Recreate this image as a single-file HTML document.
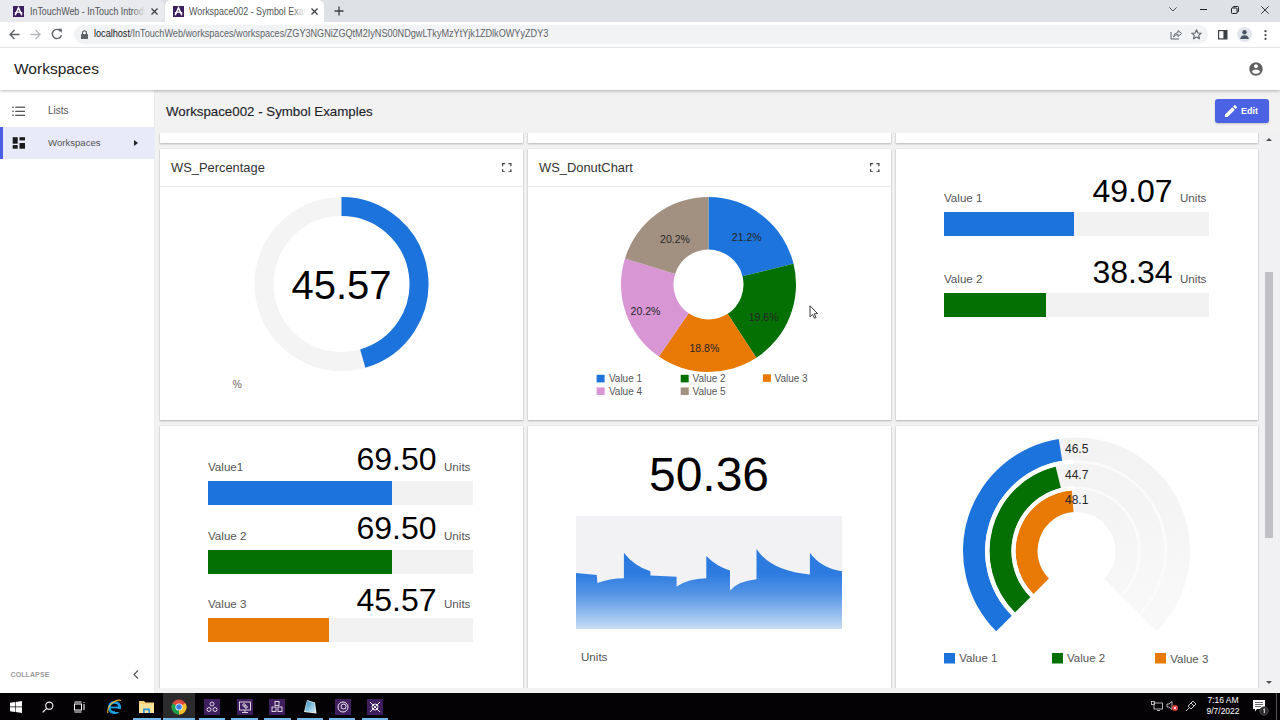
<!DOCTYPE html>
<html><head><meta charset="utf-8">
<style>
*{box-sizing:border-box;margin:0;padding:0}
html,body{width:1280px;height:720px;overflow:hidden;background:#fff;font-family:"Liberation Sans",sans-serif}
.abs{position:absolute}
#tabstrip{left:0;top:0;width:1280px;height:23px;background:#dee1e6}
#tab1{left:0;top:0;width:164px;height:22px;background:#e9eaed;border-radius:0 6px 6px 0}
#tab2{left:165px;top:0;width:159px;height:23px;background:#fff;border-radius:6px 6px 0 0}
.tabt{font-size:10px;color:#505357;white-space:nowrap;overflow:hidden}
#toolbar{left:0;top:22px;width:1280px;height:26px;background:#fff;border-bottom:1px solid #f1f1f1}
#omni{left:74px;top:3px;width:1134px;height:19px;background:#f1f3f4;border-radius:10px}
#apphdr{left:0;top:48px;width:1280px;height:42px;background:#fff;box-shadow:0 1px 3px rgba(0,0,0,.28);z-index:3}
#sidebar{left:0;top:90px;width:155px;height:603px;background:#fff;z-index:2;border-right:1px solid #ececec}
#main{left:155px;top:90px;width:1125px;height:603px;background:#f2f2f2;overflow:hidden}
#taskbar{left:0;top:693px;width:1280px;height:27px;background:#050206;z-index:5}
.ttl{font-size:12.9px;color:#333;white-space:nowrap}
.big{color:#000;white-space:nowrap;line-height:1}
.lbl{font-size:11.6px;color:#555;white-space:nowrap}
.card{position:absolute;background:#fff;box-shadow:0 1px 2px rgba(0,0,0,.25),0 0 1px rgba(0,0,0,.12)}
</style></head>
<body>
<!-- ===== tab strip ===== -->
<div id="tabstrip" class="abs">
  <div id="tab1" class="abs"></div>
  <svg class="abs" style="left:13px;top:6px" width="11" height="11" viewBox="0 0 11 11"><rect width="11" height="11" fill="#3b1f5e"/><path d="M2.2 9.3 L5.5 1.8 L8.8 9.3" stroke="#fff" stroke-width="1.5" fill="none"/><path d="M1.8 7.2 Q5.5 5.2 9.4 7" stroke="#fff" stroke-width="1.1" fill="none"/></svg>
  <div class="abs tabt" style="left:30px;top:5.5px;width:117px"><span style="display:inline-block;transform:scaleX(0.89);transform-origin:0 0">InTouchWeb - InTouch Introduction</span></div>
  <div class="abs" style="left:132px;top:2px;width:16px;height:18px;background:linear-gradient(90deg,rgba(233,234,237,0),#e9eaed 85%)"></div>
  <svg class="abs" style="left:151px;top:8px" width="7" height="7" viewBox="0 0 7 7"><path d="M0.5 0.5 L6.5 6.5 M6.5 0.5 L0.5 6.5" stroke="#3c4043" stroke-width="1.3"/></svg>
  <div id="tab2" class="abs"></div>
  <svg class="abs" style="left:173px;top:6px" width="11" height="11" viewBox="0 0 11 11"><rect width="11" height="11" fill="#3b1f5e"/><path d="M2.2 9.3 L5.5 1.8 L8.8 9.3" stroke="#fff" stroke-width="1.5" fill="none"/><path d="M1.8 7.2 Q5.5 5.2 9.4 7" stroke="#fff" stroke-width="1.1" fill="none"/></svg>
  <div class="abs tabt" style="left:189px;top:5.5px;width:118px"><span style="display:inline-block;transform:scaleX(0.89);transform-origin:0 0">Workspace002 - Symbol Examples</span></div>
  <div class="abs" style="left:292px;top:2px;width:16px;height:18px;background:linear-gradient(90deg,rgba(255,255,255,0),#fff 85%)"></div>
  <svg class="abs" style="left:311px;top:8px" width="7" height="7" viewBox="0 0 7 7"><path d="M0.5 0.5 L6.5 6.5 M6.5 0.5 L0.5 6.5" stroke="#3c4043" stroke-width="1.3"/></svg>
  <svg class="abs" style="left:334px;top:6px" width="10" height="10" viewBox="0 0 10 10"><path d="M5 0.5 V9.5 M0.5 5 H9.5" stroke="#3c4043" stroke-width="1.3"/></svg>
  <!-- window controls -->
  <svg class="abs" style="left:1168.5px;top:6.5px" width="8" height="4.5" viewBox="0 0 8 4.5"><path d="M0.4 0.4 L4 4 L7.6 0.4" stroke="#3c4043" stroke-width="0.9" fill="none"/></svg>
  <div class="abs" style="left:1200px;top:9px;width:7px;height:1px;background:#202124"></div>
  <svg class="abs" style="left:1231px;top:6px" width="8" height="8" viewBox="0 0 8 8"><rect x="0.5" y="2" width="5.5" height="5.5" rx="0.8" fill="none" stroke="#202124" stroke-width="1"/><path d="M2 2 V1.3 Q2 0.5 2.8 0.5 H6.7 Q7.5 0.5 7.5 1.3 V5.2 Q7.5 6 6.7 6 H6" fill="none" stroke="#202124" stroke-width="1"/></svg>
  <svg class="abs" style="left:1261px;top:6px" width="8" height="8" viewBox="0 0 8 8"><path d="M0.3 0.3 L7.7 7.7 M7.7 0.3 L0.3 7.7" stroke="#202124" stroke-width="0.9"/></svg>
</div>
<!-- ===== toolbar ===== -->
<div id="toolbar" class="abs">
  <svg class="abs" style="left:9px;top:7px" width="11" height="11" viewBox="0 0 11 11"><path d="M10.5 5.5 H1.2 M5.5 1 L1 5.5 L5.5 10" stroke="#5f6368" stroke-width="1.4" fill="none"/></svg>
  <svg class="abs" style="left:30px;top:7px" width="11" height="11" viewBox="0 0 11 11"><path d="M0.5 5.5 H9.8 M5.5 1 L10 5.5 L5.5 10" stroke="#b5b8bb" stroke-width="1.4" fill="none"/></svg>
  <svg class="abs" style="left:51px;top:6px" width="12" height="12" viewBox="0 0 12 12"><path d="M9.6 3.2 A4.6 4.6 0 1 0 10.4 7.2" stroke="#5f6368" stroke-width="1.4" fill="none"/><path d="M6.8 0.8 H10.8 V4.8 Z" fill="#5f6368"/></svg>
  <div id="omni" class="abs">
    <svg class="abs" style="left:7px;top:5px" width="7" height="9" viewBox="0 0 7 9"><path d="M1.5 4 V2.8 A2 2 0 0 1 5.5 2.8 V4" stroke="#5f6368" stroke-width="1.2" fill="none"/><rect x="0" y="4" width="7" height="5" rx="0.6" fill="#5f6368"/></svg>
    <div class="abs" style="left:20px;top:3px;font-size:10px;color:#5f6368;white-space:nowrap;transform:scaleX(0.911);transform-origin:0 0"><span style="color:#202124">localhost</span>/InTouchWeb/workspaces/workspaces/ZGY3NGNiZGQtM2IyNS00NDgwLTkyMzYtYjk1ZDlkOWYyZDY3</div>
    <svg class="abs" style="left:1096px;top:4px" width="12" height="11" viewBox="0 0 12 11"><path d="M1 3 V10 H9" stroke="#5f6368" stroke-width="1" fill="none"/><path d="M3.5 8 Q4 4 8 3.5 V1.5 L11.5 4.5 L8 7.5 V5.5 Q5.5 5.5 3.5 8 Z" stroke="#5f6368" stroke-width="1" fill="none"/></svg>
    <svg class="abs" style="left:1117px;top:4px" width="11" height="11" viewBox="0 0 11 11"><path d="M5.5 0.8 L6.9 4 L10.3 4.2 L7.7 6.4 L8.5 9.8 L5.5 8 L2.5 9.8 L3.3 6.4 L0.7 4.2 L4.1 4 Z" stroke="#5f6368" stroke-width="1.1" fill="none" stroke-linejoin="round"/></svg>
  </div>
  <svg class="abs" style="left:1218px;top:8px" width="9.5" height="9.5" viewBox="0 0 9.5 9.5"><rect x="0.6" y="0.6" width="8.3" height="8.3" fill="none" stroke="#3c4043" stroke-width="1.2"/><rect x="5.4" y="0.6" width="3.5" height="8.3" fill="#3c4043"/></svg>
  <div class="abs" style="left:1237px;top:5px;width:15px;height:15px;border-radius:50%;background:#e3e5ec"></div>
  <svg class="abs" style="left:1239px;top:7px" width="11" height="11" viewBox="0 0 11 11"><circle cx="5.5" cy="3.2" r="2.2" fill="#4b5563"/><path d="M1.2 10 Q1.5 6.2 5.5 6.2 Q9.5 6.2 9.8 10 Z" fill="#4b5563"/></svg>
  <svg class="abs" style="left:1264px;top:8px" width="3" height="10" viewBox="0 0 3 10"><circle cx="1.5" cy="1.2" r="1.1" fill="#3c4043"/><circle cx="1.5" cy="5" r="1.1" fill="#3c4043"/><circle cx="1.5" cy="8.8" r="1.1" fill="#3c4043"/></svg>
</div>
<!-- ===== app header ===== -->
<div id="apphdr" class="abs">
  <div class="abs" style="left:14px;top:12px;font-size:15.5px;color:#222">Workspaces</div>
  <svg class="abs" style="left:1248px;top:12.6px" width="16" height="16" viewBox="0 0 24 24"><path fill="#616161" d="M12 2C6.48 2 2 6.48 2 12s4.48 10 10 10 10-4.48 10-10S17.52 2 12 2zm0 3c1.66 0 3 1.34 3 3s-1.34 3-3 3-3-1.34-3-3 1.34-3 3-3zm0 14.2c-2.5 0-4.71-1.28-6-3.22.03-1.99 4-3.08 6-3.08 1.99 0 5.97 1.09 6 3.08-1.29 1.94-3.5 3.22-6 3.22z"/></svg>
</div>
<!-- ===== sidebar ===== -->
<div id="sidebar" class="abs">
  <svg class="abs" style="left:12px;top:16px" width="14" height="11" viewBox="0 0 14 11"><g fill="#3a3a3a"><circle cx="1" cy="1.2" r="0.8"/><rect x="3.2" y="0.65" width="9.8" height="1.1"/><circle cx="1" cy="5.3" r="0.8"/><rect x="3.2" y="4.75" width="9.8" height="1.1"/><circle cx="1" cy="9.3" r="0.8"/><rect x="3.2" y="8.75" width="9.8" height="1.1"/></g></svg>
  <div class="abs" style="left:48px;top:15px;font-size:10px;color:#555">Lists</div>
  <div class="abs" style="left:0;top:37px;width:155px;height:32px;background:#e8eaf8"></div>
  <div class="abs" style="left:0;top:37px;width:3px;height:32px;background:#4a5de3"></div>
  <svg class="abs" style="left:12px;top:47px" width="14" height="12" viewBox="0 0 14 12"><g fill="#1a1a1a"><rect x="0.7" y="0.2" width="5" height="6.5"/><rect x="0.7" y="8.1" width="5" height="3.6"/><rect x="7.5" y="0.2" width="5.5" height="3.2"/><rect x="7.5" y="6" width="5.5" height="5.7"/></g></svg>
  <div class="abs" style="left:48px;top:47px;font-size:9.6px;color:#555">Workspaces</div>
  <svg class="abs" style="left:134px;top:50px" width="4" height="6" viewBox="0 0 4 6"><path d="M0 0 L4 3 L0 6 Z" fill="#222"/></svg>
  <div class="abs" style="left:10.5px;top:581px;font-size:7px;color:#9a9a9a;letter-spacing:0.1px;font-weight:bold">COLLAPSE</div>
  <svg class="abs" style="left:133px;top:580px" width="6" height="9" viewBox="0 0 6 9"><path d="M5 0.5 L1 4.5 L5 8.5" stroke="#555" stroke-width="1.2" fill="none"/></svg>
</div>
<!-- ===== main ===== -->
<div id="main" class="abs">
  <div class="abs" style="left:11px;top:14px;font-size:13.3px;color:#1f1f2a;font-weight:500;-webkit-text-stroke:0.15px #1f1f2a">Workspace002 - Symbol Examples</div>
  <div class="abs" style="left:1060px;top:9px;width:54px;height:24px;background:#4a62e3;border-radius:3px;box-shadow:0 1px 2px rgba(0,0,0,.2)">
    <svg class="abs" style="left:7.5px;top:4px" width="16" height="16" viewBox="0 0 24 24"><path fill="#fff" d="M3 17.25V21h3.75L17.81 9.94l-3.75-3.75L3 17.25zM20.71 7.04a1 1 0 0 0 0-1.41l-2.34-2.34a1 1 0 0 0-1.41 0l-1.83 1.83 3.75 3.75 1.83-1.83z"/></svg>
    <div class="abs" style="left:26px;top:6.5px;font-size:9px;color:#fff;font-weight:bold">Edit</div>
  </div>
  <div class="abs" id="scroll" style="left:0;top:43px;width:1125px;height:555px;overflow:hidden">
  <!-- scrollbar -->
  <div class="abs" style="left:1103px;top:0;width:22px;height:555px;background:#f1f1f3"></div>
  <div class="abs" style="left:1110px;top:139px;width:8px;height:266px;background:#c1c0c4"></div>
  <svg class="abs" style="left:1111px;top:5px" width="6" height="3" viewBox="0 0 6 3"><path d="M0 3 L3 0 L6 3 Z" fill="#505050"/></svg>
  <svg class="abs" style="left:1111px;top:548px" width="6" height="3" viewBox="0 0 6 3"><path d="M0 0 L3 3 L6 0 Z" fill="#505050"/></svg>

  <!-- top partial row -->
  <div class="card" style="left:5px;top:-60px;width:363px;height:70px"></div>
  <div class="card" style="left:373px;top:-60px;width:363px;height:70px"></div>
  <div class="card" style="left:741px;top:-60px;width:362px;height:70px"></div>

  <!-- row 1 -->
  <div class="card" id="c11" style="left:5px;top:16px;width:363px;height:271px">
    <div class="abs ttl" style="left:11px;top:11px">WS_Percentage</div><svg class="abs" style="left:342px;top:13.5px" width="9.5" height="9.5" viewBox="0 0 9.5 9.5"><path d="M0.6 3.2 V0.6 H3.1 M6.4 0.6 H8.9 V3.2 M8.9 6.3 V8.9 H6.4 M3.1 8.9 H0.6 V6.3" stroke="#444" stroke-width="1.2" fill="none"/></svg>
    <div class="abs" style="left:0;top:37px;width:363px;height:1px;background:#e9e9e9"></div>
    <svg class="abs" style="left:0;top:0" width="363" height="271">
      <circle cx="181.5" cy="135" r="77.5" fill="none" stroke="#f4f4f4" stroke-width="19"/>
      <path d="M181.50 57.50 A77.5 77.5 0 0 1 202.79 209.52" fill="none" stroke="#1b73db" stroke-width="19"/>
    </svg>
    <div class="abs big" style="left:81.5px;top:116px;width:200px;text-align:center;font-size:40px">45.57</div>
    <div class="abs" style="left:72.5px;top:228.5px;font-size:10.5px;color:#666">%</div>
  </div>
  <div class="card" id="c12" style="left:373px;top:16px;width:363px;height:271px">
    <div class="abs ttl" style="left:11px;top:11px">WS_DonutChart</div><svg class="abs" style="left:342px;top:13.5px" width="9.5" height="9.5" viewBox="0 0 9.5 9.5"><path d="M0.6 3.2 V0.6 H3.1 M6.4 0.6 H8.9 V3.2 M8.9 6.3 V8.9 H6.4 M3.1 8.9 H0.6 V6.3" stroke="#444" stroke-width="1.2" fill="none"/></svg>
    <div class="abs" style="left:0;top:37px;width:363px;height:1px;background:#e9e9e9"></div>
    <svg class="abs" style="left:0;top:0" width="363" height="271">
<path d="M180.50 48.00 A87.5 87.5 0 0 1 265.52 114.81 L214.51 127.22 A35 35 0 0 0 180.50 100.50Z" fill="#1d74dc"/>
<path d="M265.52 114.81 A87.5 87.5 0 0 1 228.31 208.78 L199.62 164.81 A35 35 0 0 0 214.51 127.22Z" fill="#047004"/>
<path d="M228.31 208.78 A87.5 87.5 0 0 1 130.86 207.56 L160.65 164.32 A35 35 0 0 0 199.62 164.81Z" fill="#e87a03"/>
<path d="M130.86 207.56 A87.5 87.5 0 0 1 96.95 109.51 L147.08 125.10 A35 35 0 0 0 160.65 164.32Z" fill="#d896d5"/>
<path d="M96.95 109.51 A87.5 87.5 0 0 1 180.50 48.00 L180.50 100.50 A35 35 0 0 0 147.08 125.10Z" fill="#a29181"/>
      <g font-family="Liberation Sans" font-size="10.5" fill="#262626" text-anchor="middle">
        <text x="218.7" y="92">21.2%</text>
        <text x="235.6" y="172">19.6%</text>
        <text x="176.4" y="202.5">18.8%</text>
        <text x="117.5" y="166">20.2%</text>
        <text x="147" y="94">20.2%</text>
      </g>
      <g fill-opacity="1">
        <rect x="68.6" y="225.8" width="8" height="7.6" fill="#1d74dc"/>
        <rect x="152.7" y="225.8" width="8" height="7.6" fill="#047004"/>
        <rect x="234.9" y="225.3" width="8" height="7.6" fill="#e87a03"/>
        <rect x="68.6" y="238.4" width="8" height="7.6" fill="#d896d5"/>
        <rect x="152.7" y="238.4" width="8" height="7.6" fill="#a29181"/>
      </g>
      <g font-family="Liberation Sans" font-size="10" fill="#555">
        <text x="80.9" y="233">Value 1</text>
        <text x="164.5" y="233">Value 2</text>
        <text x="246.5" y="232.5">Value 3</text>
        <text x="80.9" y="246">Value 4</text>
        <text x="164.5" y="246">Value 5</text>
      </g>
    </svg>
  </div>
  <div class="card" id="c13" style="left:741px;top:16px;width:362px;height:271px">
    <div class="abs lbl" style="left:48px;top:42px">Value 1</div>
    <div class="abs big" style="left:148.5px;top:25.5px;width:128px;text-align:right;font-size:32px">49.07</div>
    <div class="abs lbl" style="left:284px;top:42px">Units</div>
    <div class="abs" style="left:48px;top:63px;width:265px;height:24px;background:#f2f2f2"></div>
    <div class="abs" style="left:48px;top:63px;width:130.0px;height:24px;background:#1b73db"></div>
    <div class="abs lbl" style="left:48px;top:123px">Value 2</div>
    <div class="abs big" style="left:148.5px;top:106.5px;width:128px;text-align:right;font-size:32px">38.34</div>
    <div class="abs lbl" style="left:284px;top:123px">Units</div>
    <div class="abs" style="left:48px;top:144px;width:265px;height:24px;background:#f2f2f2"></div>
    <div class="abs" style="left:48px;top:144px;width:101.6px;height:24px;background:#047004"></div>
  </div>
  <!-- row 2 -->
  <div class="card" id="c21" style="left:5px;top:293px;width:363px;height:275px">
    <div class="abs lbl" style="left:48px;top:34px">Value1</div>
    <div class="abs big" style="left:148.5px;top:17px;width:128px;text-align:right;font-size:32px">69.50</div>
    <div class="abs lbl" style="left:284px;top:34px">Units</div>
    <div class="abs" style="left:48px;top:55px;width:265px;height:24px;background:#f2f2f2"></div>
    <div class="abs" style="left:48px;top:55px;width:184.2px;height:24px;background:#1b73db"></div>
    <div class="abs lbl" style="left:48px;top:102.5px">Value 2</div>
    <div class="abs big" style="left:148.5px;top:85.5px;width:128px;text-align:right;font-size:32px">69.50</div>
    <div class="abs lbl" style="left:284px;top:102.5px">Units</div>
    <div class="abs" style="left:48px;top:123.5px;width:265px;height:24px;background:#f2f2f2"></div>
    <div class="abs" style="left:48px;top:123.5px;width:184.2px;height:24px;background:#047004"></div>
    <div class="abs lbl" style="left:48px;top:171px">Value 3</div>
    <div class="abs big" style="left:148.5px;top:158px;width:128px;text-align:right;font-size:32px">45.57</div>
    <div class="abs lbl" style="left:284px;top:171px">Units</div>
    <div class="abs" style="left:48px;top:192px;width:265px;height:24px;background:#f2f2f2"></div>
    <div class="abs" style="left:48px;top:192px;width:120.8px;height:24px;background:#e87a03"></div>
  </div>
  <div class="card" id="c22" style="left:373px;top:293px;width:363px;height:275px">
    <div class="abs big" style="left:81px;top:25px;width:200px;text-align:center;font-size:48px">50.36</div>
    <svg class="abs" style="left:48px;top:90px" width="266" height="113" viewBox="0 0 266 113">
      <defs><linearGradient id="ag" x1="0" y1="0" x2="0" y2="1"><stop offset="0.3" stop-color="#2d7bdf"/><stop offset="0.55" stop-color="#5293e5"/><stop offset="0.85" stop-color="#9dc3f0"/><stop offset="1" stop-color="#c9def6"/></linearGradient></defs>
      <rect width="266" height="113" fill="#f2f2f4"/>
      <path d="M0 56.9 L20.8 59 L21.4 67 Q34 62.5 47.9 62.3 L47.9 36.7 Q58 50 74.4 55.3 L74.4 59.4 L100.6 60.7 L100.6 70.6 Q112 62.8 130.3 62.3 L130.3 40 Q140 50 154 54.6 L154 74.4 Q162 65 180.5 63.2 L180.5 32.9 Q195 55 233.9 58.4 L233.9 36.7 Q245 52 266 55.3 L266 113 L0 113 Z" fill="url(#ag)"/>
    </svg>
    <div class="abs lbl" style="left:53px;top:223.5px">Units</div>
  </div>
  <div class="card" id="c23" style="left:741px;top:293px;width:362px;height:275px">
    <svg class="abs" style="left:0;top:0" width="362" height="262">
      <defs><linearGradient id="tg" x1="0" y1="0" x2="0.3" y2="1"><stop offset="0" stop-color="#f2f2f3"/><stop offset="0.5" stop-color="#f4f4f5"/><stop offset="1" stop-color="#f8f8f9"/></linearGradient></defs>
      <path d="M100.24 205.26 A113.5 113.5 0 1 1 260.76 205.26 L208.08 152.58 A39 39 0 1 0 152.92 152.58Z" fill="url(#tg)"/>
      <path d="M117.39 188.11 A89.25 89.25 0 1 1 243.61 188.11" fill="none" stroke="#fbfbfb" stroke-width="2.5"/>
      <path d="M135.95 169.55 A63 63 0 1 1 225.05 169.55" fill="none" stroke="#fbfbfb" stroke-width="2.5"/>
      <path d="M100.24 205.26 A113.5 113.5 0 0 1 162.74 12.90 L166.19 34.63 A91.5 91.5 0 0 0 115.80 189.70Z" fill="#1b73db"/>
      <path d="M118.98 186.52 A87 87 0 0 1 159.60 40.55 L164.89 61.90 A65 65 0 0 0 134.54 170.96Z" fill="#047004"/>
      <path d="M137.37 168.13 A61 61 0 0 1 175.82 64.18 L177.51 86.11 A39 39 0 0 0 152.92 152.58Z" fill="#e87a03"/>
      <path d="M117.39 188.11 A89.25 89.25 0 0 1 177.39 35.80" fill="none" stroke="#fff" stroke-width="4.2"/>
      <path d="M135.95 169.55 A63 63 0 0 1 178.30 62.04" fill="none" stroke="#fff" stroke-width="4.2"/>
      <g font-family="Liberation Sans" font-size="12" fill="#262626">
        <text x="169" y="27.3">46.5</text>
        <text x="169" y="53">44.7</text>
        <text x="169" y="78.3">48.1</text>
      </g>
      <rect x="48" y="227" width="11" height="10.5" fill="#1b73db"/>
      <rect x="156" y="227" width="11" height="10.5" fill="#047004"/>
      <rect x="259" y="227" width="11" height="10.5" fill="#e87a03"/>
      <g font-family="Liberation Sans" font-size="11.5" fill="#555">
        <text x="63.3" y="236.3">Value 1</text>
        <text x="171" y="236.3">Value 2</text>
        <text x="274.2" y="236.6">Value 3</text>
      </g>
    </svg>
  </div>
</div>
</div>
<!-- ===== taskbar ===== -->
<div id="taskbar" class="abs">
  <!-- windows logo -->
  <svg class="abs" style="left:10px;top:8px" width="12" height="12" viewBox="0 0 12 12"><g fill="#fff"><path d="M0 1.7 L5 1 V5.6 H0Z"/><path d="M5.6 0.9 L12 0 V5.6 H5.6Z"/><path d="M0 6.2 H5 V11 L0 10.3Z"/><path d="M5.6 6.2 H12 V12 L5.6 11.1Z"/></g></svg>
  <!-- search -->
  <svg class="abs" style="left:42px;top:8px" width="12" height="12" viewBox="0 0 12 12"><circle cx="7.3" cy="4.7" r="3.6" stroke="#fff" stroke-width="1.1" fill="none"/><path d="M4.7 7.3 L0.6 11.4" stroke="#fff" stroke-width="1.2"/></svg>
  <!-- task view -->
  <svg class="abs" style="left:74px;top:8px" width="12" height="12" viewBox="0 0 12 12"><g stroke="#fff" stroke-width="1" fill="none"><rect x="0.5" y="3" width="7" height="6"/><path d="M0.5 1 H7.5 M0.5 11 H7.5"/><path d="M10 3 V9 M10 1 V2"/></g></svg>
  <!-- IE -->
  <svg class="abs" style="left:106px;top:6px" width="16" height="16" viewBox="0 0 16 16"><circle cx="8.5" cy="8.5" r="5.2" stroke="#1ea0e8" stroke-width="2.8" fill="none"/><rect x="4" y="7.6" width="9" height="1.8" fill="#1ea0e8"/><rect x="9" y="10" width="6" height="3" fill="#050206"/><path d="M2 14 Q0.5 11 5 5 Q11 0 15 1.5" stroke="#f3b21b" stroke-width="1.1" fill="none"/></svg>
  <!-- explorer -->
  <svg class="abs" style="left:139px;top:7px" width="16" height="14" viewBox="0 0 16 14"><path d="M0 1 H5 L6.5 2.5 H15 V13 H0Z" fill="#f6d27a"/><rect x="0" y="4" width="15" height="9" fill="#fbe29a"/><path d="M4 13 V8.5 H11 V13 H9.3 V10.3 H5.7 V13Z" fill="#2c9ad8"/></svg>
  <div class="abs" style="left:133px;top:25px;width:28px;height:2px;background:#76b9ed"></div>
  <!-- chrome active -->
  <div class="abs" style="left:163px;top:0;width:32px;height:27px;background:#2b2a2c"></div>
  <div class="abs" style="left:163px;top:25px;width:32px;height:2px;background:#76b9ed"></div>
  <svg class="abs" style="left:171px;top:6px" width="16" height="16" viewBox="0 0 16 16"><circle cx="8" cy="8" r="7.5" fill="#dd4b3e"/><path d="M8 8 L1.5 4.25 A7.5 7.5 0 0 0 8 15.5 Z" fill="#1a9e4b"/><path d="M8 8 L14.5 4.25 A7.5 7.5 0 0 1 8 15.5 Z" fill="#f6c02b"/><circle cx="8" cy="8" r="3.6" fill="#fff"/><circle cx="8" cy="8" r="2.8" fill="#3a7de9"/></svg>
  <!-- purple app icons -->
  <div class="abs" style="left:204px;top:6px;width:16px;height:16px;background:#3e1e5e"></div>
  <svg class="abs" style="left:204px;top:6px" width="16" height="16" viewBox="0 0 16 16"><g stroke="#fff" stroke-width="0.8" fill="none"><circle cx="8" cy="5" r="2"/><circle cx="5" cy="10.5" r="2"/><circle cx="11" cy="10.5" r="2"/></g></svg>
  <div class="abs" style="left:237px;top:6px;width:16px;height:16px;background:#3e1e5e"></div>
  <svg class="abs" style="left:237px;top:6px" width="16" height="16" viewBox="0 0 16 16"><g stroke="#fff" stroke-width="0.8" fill="none"><rect x="2.5" y="3" width="11" height="8"/><path d="M8 11 V13 M5 13.5 H11"/><circle cx="7" cy="6" r="1.3"/><circle cx="9" cy="8" r="1.3"/></g></svg>
  <div class="abs" style="left:269px;top:6px;width:16px;height:16px;background:#3e1e5e"></div>
  <svg class="abs" style="left:269px;top:6px" width="16" height="16" viewBox="0 0 16 16"><g stroke="#fff" stroke-width="0.8" fill="none"><rect x="6" y="2.5" width="4" height="4"/><rect x="3" y="8" width="4" height="4.5"/><rect x="9" y="8" width="4" height="4.5"/></g></svg>
  <svg class="abs" style="left:302px;top:6px" width="16" height="16" viewBox="0 0 16 16"><defs><linearGradient id="np" x1="0" y1="0" x2="1" y2="1"><stop offset="0" stop-color="#2f8fc4"/><stop offset="1" stop-color="#d6eef8"/></linearGradient></defs><path d="M5 1 L13 3.5 L14.5 14.5 L2 13 Z" fill="#f0f0ea"/><path d="M5.2 1.8 L12.4 4 L13.6 13.4 L3 12.2 Z" fill="url(#np)"/></svg>
  <div class="abs" style="left:335px;top:6px;width:16px;height:16px;background:#3e1e5e"></div>
  <svg class="abs" style="left:335px;top:6px" width="16" height="16" viewBox="0 0 16 16"><g stroke="#fff" stroke-width="0.9" fill="none"><circle cx="8" cy="8" r="5"/><circle cx="8.5" cy="7.5" r="2.5"/></g></svg>
  <div class="abs" style="left:367px;top:6px;width:16px;height:16px;background:#3e1e5e"></div>
  <svg class="abs" style="left:367px;top:6px" width="16" height="16" viewBox="0 0 16 16"><g stroke="#fff" stroke-width="0.9" fill="none"><path d="M3 3 L13 13 M13 3 L3 13"/><circle cx="8" cy="8" r="3"/></g></svg>
  <div class="abs" style="left:199px;top:25px;width:26px;height:2px;background:#76b9ed"></div>
  <div class="abs" style="left:231px;top:25px;width:27px;height:2px;background:#76b9ed"></div>
  <div class="abs" style="left:264px;top:25px;width:27px;height:2px;background:#76b9ed"></div>
  <div class="abs" style="left:297px;top:25px;width:26px;height:2px;background:#76b9ed"></div>
  <div class="abs" style="left:329px;top:25px;width:26px;height:2px;background:#76b9ed"></div>
  <div class="abs" style="left:362px;top:25px;width:26px;height:2px;background:#76b9ed"></div>
  <!-- tray -->
  <svg class="abs" style="left:1151px;top:8px" width="12" height="11" viewBox="0 0 12 11"><g stroke="#ddd" stroke-width="0.8" fill="none"><rect x="3" y="2" width="8.5" height="6"/><rect x="0.5" y="0.5" width="3" height="3"/><path d="M6 9.5 H9"/></g></svg>
  <svg class="abs" style="left:1166px;top:7px" width="13" height="12" viewBox="0 0 13 12"><path d="M1 4 H3 L6 1.5 V9.5 L3 7 H1Z" stroke="#ddd" stroke-width="0.8" fill="none"/><circle cx="9" cy="8" r="3" fill="#e0393e"/><path d="M7.8 6.8 L10.2 9.2 M10.2 6.8 L7.8 9.2" stroke="#fff" stroke-width="0.8"/></svg>
  <svg class="abs" style="left:1185px;top:7px" width="12" height="12" viewBox="0 0 12 12"><g stroke="#ddd" stroke-width="0.9" fill="none"><path d="M1 11 L4 8 M3 6 L8 1 L11 4 L6 9 Z M6 3 L9 6"/></g></svg>
  <div class="abs" style="left:1204px;top:2px;width:38px;text-align:center;font-size:8.5px;color:#fff;line-height:11px">7:16 AM<br>9/7/2022</div>
  <svg class="abs" style="left:1252px;top:6px" width="18" height="17" viewBox="0 0 18 17"><path d="M1 1 H13 V10 H5 L3 12.5 V10 H1Z" fill="#fff"/><g stroke="#444" stroke-width="0.8"><path d="M3 3.5 H11 M3 5.5 H11 M3 7.5 H9"/></g><circle cx="12" cy="12" r="4.2" fill="#2b2b2b" stroke="#555" stroke-width="0.8"/><path d="M12.3 9.8 V14.2 M11.3 10.7 L12.3 9.8" stroke="#fff" stroke-width="0.9"/></svg>
  <div class="abs" style="left:1276px;top:0;width:1px;height:27px;background:#555"></div>
</div>
<svg class="abs" style="left:808.5px;top:304.5px;z-index:10" width="10" height="15" viewBox="0 0 10 15"><path d="M1 0.8 V11.8 L3.6 9.4 L5.4 13.2 L7 12.5 L5.3 8.8 L8.6 8.6 Z" fill="#fff" stroke="#3a3a3a" stroke-width="1" stroke-linejoin="round"/></svg>
</body></html>
